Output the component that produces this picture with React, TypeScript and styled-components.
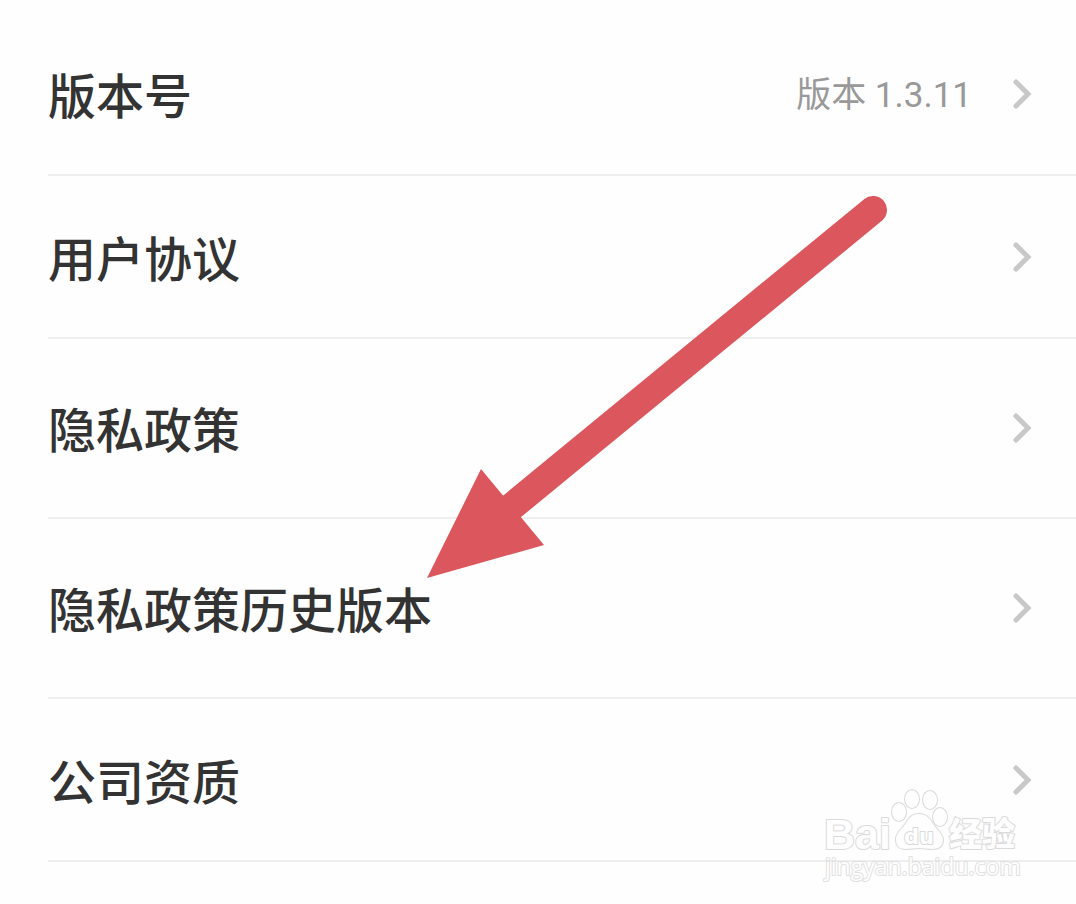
import React from "react";
import styled, { createGlobalStyle } from "styled-components";

const GlobalStyle = createGlobalStyle`
  * { box-sizing: border-box; }
  body {
    margin: 0;
    background: #fefefe;
    color: #333;
    font-family: Roboto, "Noto Sans CJK SC", sans-serif;
  }
`;

const Page = styled.main`
  position: relative;
  min-height: 100vh;
  padding-top: 13px;
  overflow: hidden;
`;

const List = styled.ul`
  margin: 0;
  padding: 0 0 0 48px;
  list-style: none;
`;

const Item = styled.li`
  border-bottom: 2px solid #eee;
`;

const RowLink = styled.a<{ $tall?: boolean }>`
  display: flex;
  align-items: center;
  min-height: ${(p) => (p.$tall ? 178 : 161)}px;
  padding-right: 44px;
  color: inherit;
  text-decoration: none;
`;

const Label = styled.span`
  flex: 1;
  padding-bottom: 2px;
  font-family: "Noto Sans CJK SC", sans-serif;
  font-size: 48px;
  font-weight: 500;
  line-height: 72px;
`;

const Value = styled.span`
  margin-right: 40px;
  padding-top: 4px;
  color: #999;
  font-size: 35px;
  line-height: 48px;
`;

const Chevron = styled.svg`
  flex: none;
  width: 20px;
  height: 32px;
  fill: none;
  stroke: #c8c8c8;
  stroke-width: 5;
`;

const Arrow = styled.svg`
  position: absolute;
  top: 190px;
  left: 420px;
  width: 480px;
  height: 400px;
  pointer-events: none;
`;

const Watermark = styled.svg`
  position: absolute;
  top: 780px;
  right: 50px;
  width: 206px;
  height: 110px;
  pointer-events: none;
  fill: #fefefe;
  stroke: #dadada;
  stroke-width: 2;
  stroke-linejoin: round;
  paint-order: stroke;
`;

const BrandText = styled.text`
  font-family: "Liberation Sans", sans-serif;
  font-size: 43px;
  font-weight: 700;
`;

const PawText = styled.text`
  font-family: "DejaVu Sans", sans-serif;
  font-size: 21px;
  font-weight: 700;
`;

const ChannelText = styled.text`
  font-family: "Noto Sans CJK SC", sans-serif;
  font-size: 33px;
  font-weight: 900;
`;

const SiteText = styled.text`
  font-family: "Open Sans", sans-serif;
  font-size: 23px;
  stroke: #e0e0e0;
`;

const rows = [
  { label: "版本号", value: "版本 1.3.11" },
  { label: "用户协议" },
  { label: "隐私政策", tall: true },
  { label: "隐私政策历史版本", tall: true },
  { label: "公司资质" },
];

export default function App() {
  return (
    <>
      <GlobalStyle />
      <Page>
        <List>
          {rows.map((row) => (
            <Item key={row.label}>
              <RowLink href="#" $tall={row.tall}>
                <Label>{row.label}</Label>
                {row.value && <Value>{row.value}</Value>}
                <Chevron viewBox="0 0 20 32" aria-hidden="true">
                  <path d="M4 4L16 16L4 28" strokeLinecap="round" />
                </Chevron>
              </RowLink>
            </Item>
          ))}
        </List>
        <Arrow viewBox="420 190 480 400" aria-hidden="true">
          <path d="M510 508L873 210" stroke="#db575d" strokeWidth="28" strokeLinecap="round" />
          <path d="M427 578L481 469L544 545Z" fill="#db575d" />
        </Arrow>
        <Watermark viewBox="820 780 206 110">
          <BrandText x="824" y="849">Bai</BrandText>
          <g>
            <ellipse cx="899" cy="812" rx="7" ry="9" />
            <ellipse cx="912" cy="799" rx="7" ry="9" />
            <ellipse cx="930" cy="800" rx="7" ry="9" />
            <ellipse cx="940" cy="817" rx="7" ry="9" />
            <path d="M919 814C927 814 930 819 933 824C937 830 943 834 943 840C943 846 939 849 932 849C927 849 924 848 919 848C914 848 911 849 906 849C899 849 896 846 896 839C896 833 902 829 906 823C909 818 912 814 919 814Z" />
          </g>
          <PawText x="904" y="844">du</PawText>
          <ChannelText x="949" y="846">经验</ChannelText>
          <SiteText x="825" y="875">jingyan.baidu.com</SiteText>
        </Watermark>
      </Page>
    </>
  );
}
